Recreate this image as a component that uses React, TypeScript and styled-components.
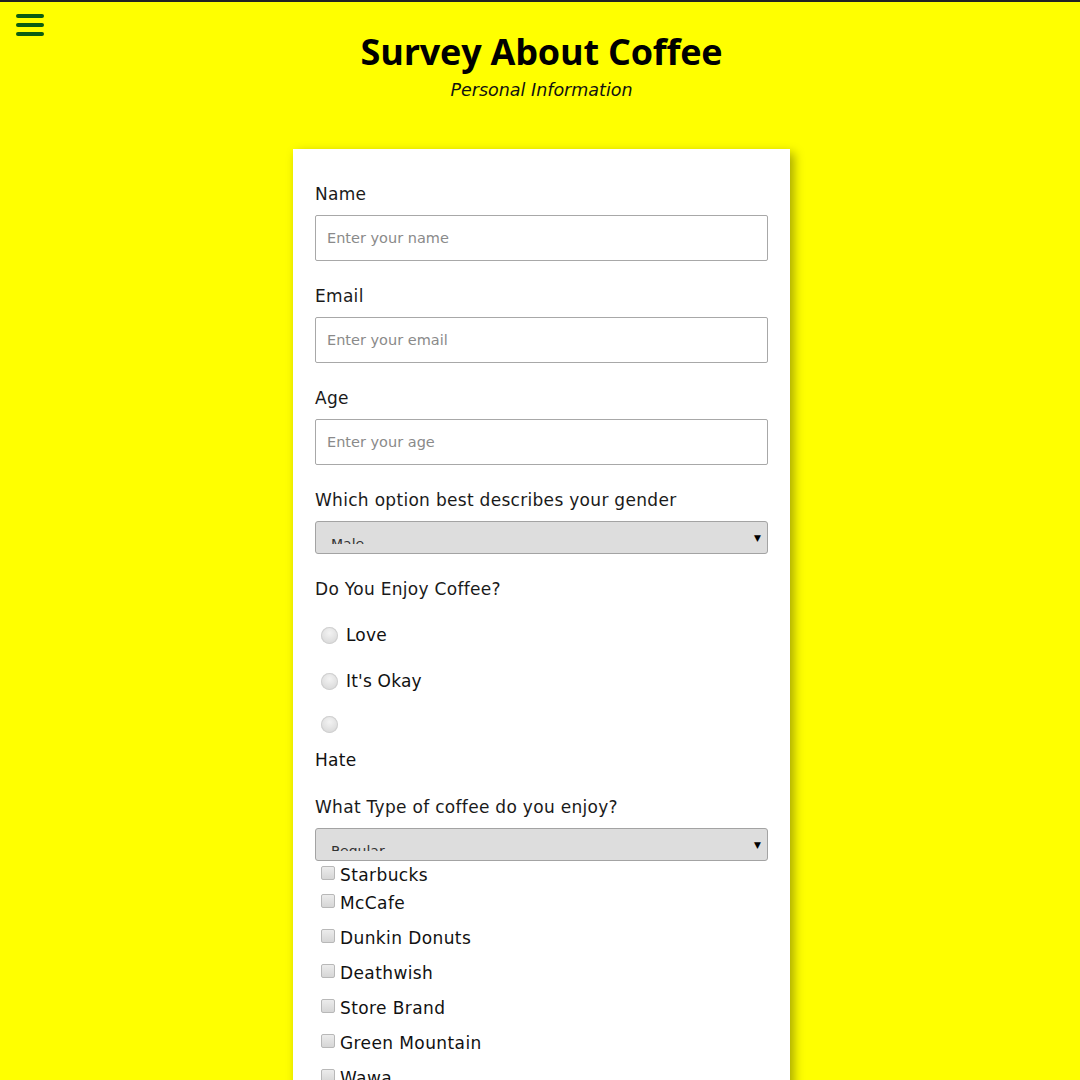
import React from "react";
import styled, { createGlobalStyle } from "styled-components";

const Global = createGlobalStyle`
  html, body { margin: 0; padding: 0; }
  body {
    background: #ffff00;
    font-family: "DejaVu Sans", "Open Sans", sans-serif;
    color: #111;
    border-top: 2px solid #222;
  }
`;

const Page = styled.div`
  min-height: 1078px;
  display: flex;
  flex-direction: column;
  align-items: center;
  position: relative;
`;

const Burger = styled.button`
  position: absolute;
  left: 16px;
  top: 12px;
  width: 28px;
  padding: 0;
  border: 0;
  background: transparent;
  display: flex;
  flex-direction: column;
  gap: 5px;
`;

const Bar = styled.span`
  display: block;
  height: 4px;
  border-radius: 2px;
  background: #0b5d12;
`;

const Header = styled.header`
  text-align: center;
  padding-top: 27px;
  margin-left: 3px;
`;

const Title = styled.h1`
  margin: 0;
  font-family: "Open Sans", sans-serif;
  font-size: 36px;
  line-height: 46px;
  font-weight: 700;
  color: #000;
  letter-spacing: -0.2px;
`;

const Subtitle = styled.p`
  margin: 3px 0 0;
  font-size: 17.5px;
  line-height: 24px;
  font-style: italic;
  color: #111;
`;

const Card = styled.form`
  margin-top: 47px;
  width: 497px;
  box-sizing: border-box;
  background: #fff;
  padding: 33px 22px 0;
  box-shadow: 4px 4px 10px rgba(0, 0, 0, 0.35);
  margin-left: 3px;
`;

const Group = styled.div`
  margin-bottom: 23px;
`;

const Label = styled.label<{ $mb?: number }>`
  display: block;
  font-size: 17px;
  letter-spacing: 0.3px;
  line-height: 24px;
  color: #1a1a1a;
  margin-bottom: ${(p) => p.$mb ?? 9}px;
`;

const Input = styled.input`
  display: block;
  width: 100%;
  box-sizing: border-box;
  height: 46px;
  border: 1px solid #a8a8a8;
  border-radius: 2px;
  padding: 0 11px;
  font-family: inherit;
  font-size: 14.5px;
  outline: none;
  &::placeholder { color: #8a8a8a; }
`;

const SelectBox = styled.div`
  display: flex;
  align-items: flex-start;
  height: 33px;
  box-sizing: border-box;
  border: 1px solid #a3a3a3;
  border-radius: 3px;
  background: #dddddd;
  padding: 0 6px 0 15px;
`;

const ValueClip = styled.div`
  flex: 1;
  height: 22px;
  overflow: hidden;
`;

const Value = styled.span`
  display: block;
  padding-top: 12px;
  font-size: 14px;
  line-height: 20px;
  color: #333;
`;

const Arrow = styled.span`
  margin-top: 11px;
  font-size: 9px;
  color: #000;
`;

const RadioRow = styled.div<{ $h?: number }>`
  display: flex;
  align-items: center;
  height: ${(p) => p.$h ?? 46}px;
  font-size: 17px;
  letter-spacing: 0.2px;
`;

const RadioDot = styled.span`
  width: 17px;
  height: 17px;
  border-radius: 50%;
  margin: 0 8px 0 6px;
  background: radial-gradient(circle at 50% 35%, #f3f3f3 0%, #dcdcdc 70%, #c8c8c8 100%);
  box-shadow: inset 0 0 0 1px #d0d0d0;
`;

const PlainLine = styled.div`
  margin-top: 4px;
  font-size: 17px;
  letter-spacing: 0.3px;
  line-height: 24px;
`;

const CheckRow = styled.div<{ $h: number; $mt?: number }>`
  display: flex;
  align-items: center;
  height: ${(p) => p.$h}px;
  margin-top: ${(p) => p.$mt ?? 0}px;
  font-size: 17px;
  letter-spacing: 0.4px;
`;

const CheckBox = styled.span`
  width: 14px;
  height: 14px;
  box-sizing: border-box;
  border: 1px solid #b8b8b8;
  border-radius: 2px;
  margin: -4px 5px 0 6px;
  background: linear-gradient(#ececec, #d6d6d6);
`;

const Select = ({ value }: { value: string }) => (
  <SelectBox>
    <ValueClip>
      <Value>{value}</Value>
    </ValueClip>
    <Arrow>▼</Arrow>
  </SelectBox>
);

const brands = ["Starbucks", "McCafe", "Dunkin Donuts", "Deathwish", "Store Brand", "Green Mountain", "Wawa"];

export default function App() {
  return (
    <Page>
      <Global />
      <Burger aria-label="menu">
        <Bar />
        <Bar />
        <Bar />
      </Burger>
      <Header>
        <Title>Survey About Coffee</Title>
        <Subtitle>Personal Information</Subtitle>
      </Header>
      <Card>
        <Group>
          <Label>Name</Label>
          <Input placeholder="Enter your name" />
        </Group>
        <Group>
          <Label>Email</Label>
          <Input placeholder="Enter your email" />
        </Group>
        <Group>
          <Label>Age</Label>
          <Input placeholder="Enter your age" />
        </Group>
        <Group>
          <Label>Which option best describes your gender</Label>
          <Select value="Male" />
        </Group>
        <Group>
          <Label $mb={11}>Do You Enjoy Coffee?</Label>
          <RadioRow>
            <RadioDot />
            Love
          </RadioRow>
          <RadioRow>
            <RadioDot />
            It's Okay
          </RadioRow>
          <RadioRow $h={40}>
            <RadioDot />
          </RadioRow>
          <PlainLine>Hate</PlainLine>
        </Group>
        <div>
          <Label>What Type of coffee do you enjoy?</Label>
          <Select value="Regular" />
          {brands.map((b, i) => (
            <CheckRow key={b} $h={i < 2 ? 28 : 35} $mt={i === 2 ? 3 : 0}>
              <CheckBox />
              {b}
            </CheckRow>
          ))}
        </div>
      </Card>
    </Page>
  );
}
